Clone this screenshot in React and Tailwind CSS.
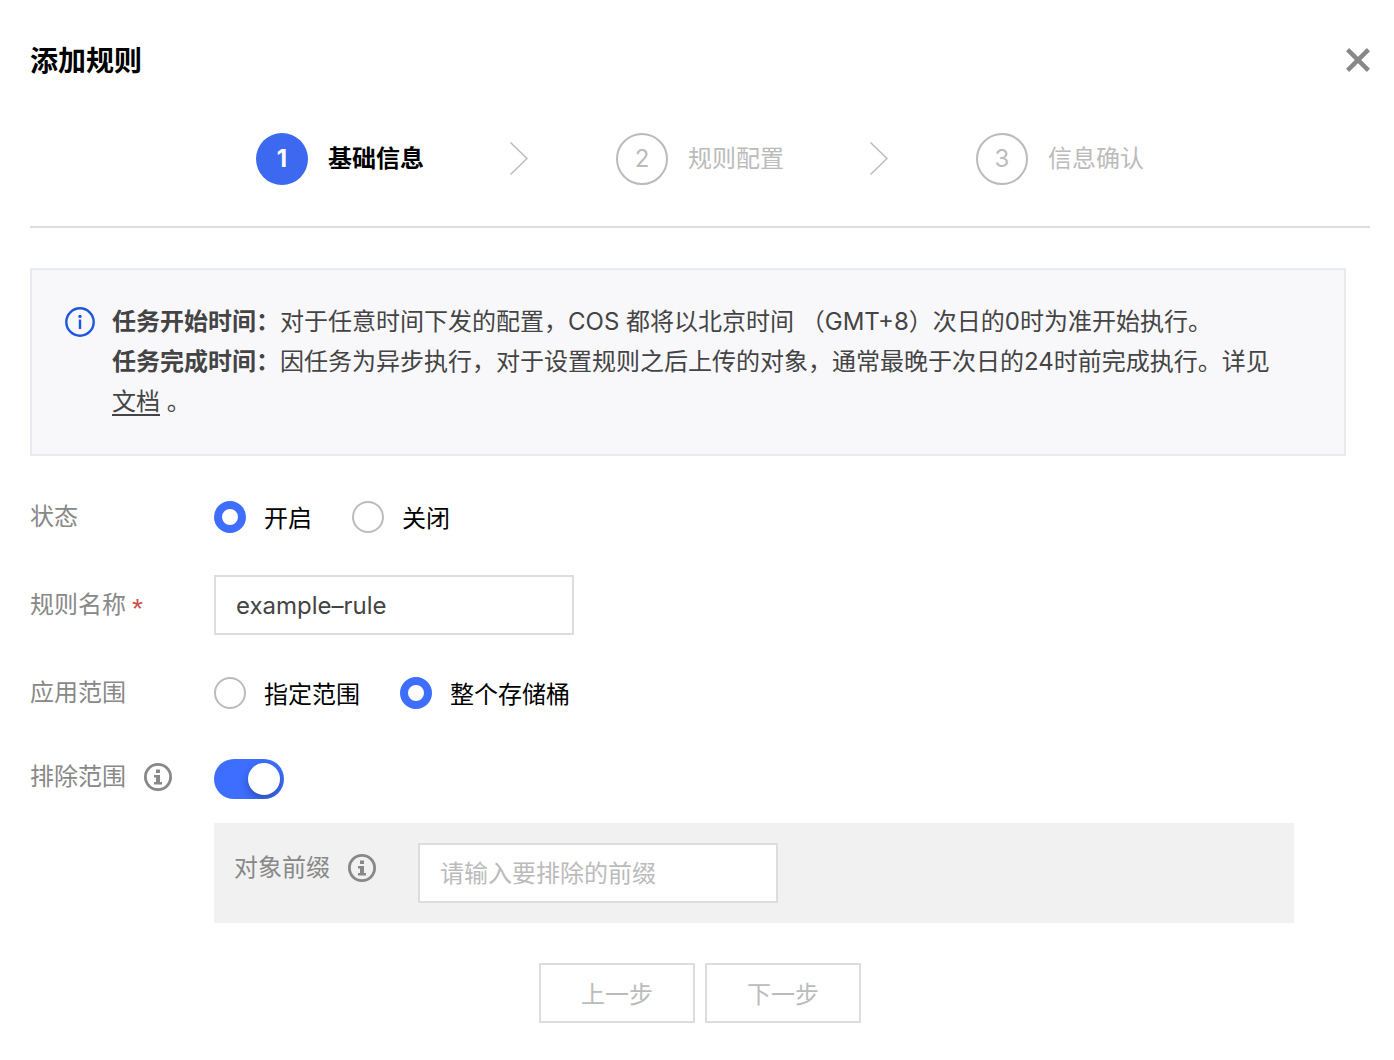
import React, { useState } from 'react';

const steps = ['基础信息', '规则配置', '信息确认'];

const CloseIcon = () => (
  <svg width="24" height="24" viewBox="0 0 24 24" fill="none" stroke="#888888" strokeWidth="4.4">
    <path d="M1.6 1.6l20.8 20.8M22.4 1.6L1.6 22.4" />
  </svg>
);

const ArrowIcon = () => (
  <svg width="18" height="34" viewBox="0 0 18 34" fill="none" stroke="#bbbbbb" strokeWidth="1.5">
    <path d="M0.5 0.5l16.5 16L0.5 32.5" />
  </svg>
);

// Grey help icon beside a field label
const HelpIcon = () => (
  <svg width="28" height="28" viewBox="0 0 28 28" fill="none" aria-hidden="true">
    <circle cx="14" cy="14" r="12.6" stroke="#888888" strokeWidth="2.8" />
    <path d="M12 6.5h4V10h-4zM10 12h6v7h2v2.5h-8V19h2v-4.5h-2z" fill="#888888" />
  </svg>
);

const NoticeIcon = () => (
  <svg width="32" height="32" viewBox="0 0 32 32" fill="none" aria-hidden="true">
    <circle cx="16" cy="16" r="13.7" stroke="#1f56e0" strokeWidth="2.4" />
    <circle cx="16" cy="10.4" r="1.7" fill="#1f56e0" />
    <path d="M14.8 13.5h2.4V23h-2.4z" fill="#1f56e0" />
  </svg>
);

const Radio = ({ name, label, checked, onChange }) => (
  <label className="flex items-center gap-[18px] text-black cursor-pointer">
    <input
      type="radio"
      name={name}
      checked={checked}
      onChange={onChange}
      className="appearance-none size-8 shrink-0 rounded-full border-2 border-[#bbbbbb] bg-white checked:border-8 checked:border-[#3d6eff]"
    />
    <span className="pt-[3px]">{label}</span>
  </label>
);

const inputClass =
  'h-[60px] w-[360px] max-w-full border-2 border-[#dddddd] bg-white px-5 text-[#444444] placeholder:text-[#bbbbbb] placeholder:opacity-100 outline-none';

const buttonClass = 'h-[60px] w-[156px] border-2 border-[#dddddd] bg-white pt-1 text-[#bbbbbb]';

const App = () => {
  const [enabled, setEnabled] = useState(true);
  const [name, setName] = useState('example–rule');
  const [scope, setScope] = useState('bucket');
  const [exclude, setExclude] = useState(true);
  const [prefix, setPrefix] = useState('');

  return (
    <div className="min-h-screen bg-white pt-10 pr-6 pb-9 pl-[30px] font-['Inter','Noto_Sans_CJK_SC',sans-serif] text-2xl text-[#888888]">
      {/* Header */}
      <header className="flex h-10 items-center justify-between">
        <h1 className="pt-1 text-[28px] font-bold text-black">添加规则</h1>
        <button type="button" aria-label="关闭" className="cursor-pointer">
          <CloseIcon />
        </button>
      </header>

      {/* Steps */}
      <ol className="mt-[53px] flex items-center justify-center border-b-2 border-[#dddddd] pb-[41px]">
        {steps.map((step, i) => (
          <li key={step} className="flex items-center">
            {i > 0 && (
              <span className="mr-[88px] ml-[86px]">
                <ArrowIcon />
              </span>
            )}
            <span
              className={
                i === 0
                  ? 'flex size-[52px] items-center justify-center rounded-full bg-[#3c69ef] font-bold text-white'
                  : 'flex size-[52px] items-center justify-center rounded-full border-2 border-[#bbbbbb] text-[#bbbbbb]'
              }
            >
              {i + 1}
            </span>
            <span className={i === 0 ? 'ml-5 font-bold text-black' : 'ml-5 text-[#bbbbbb]'}>{step}</span>
          </li>
        ))}
      </ol>

      {/* Notice */}
      <div className="mt-10 mr-6 flex items-start gap-4 border-2 border-[#e7eaf1] bg-[#f8f8fb] p-8 leading-10 text-[#444444]">
        <span className="flex h-10 shrink-0 items-center">
          <NoticeIcon />
        </span>
        <div>
          <p>
            <strong>任务开始时间：</strong>对于任意时间下发的配置，COS 都将以北京时间 （GMT+8）次日的0时为准开始执行。
          </p>
          <p>
            <strong>任务完成时间：</strong>因任务为异步执行，对于设置规则之后上传的对象，通常最晚于次日的24时前完成执行。详见{' '}
            <a href="#doc" className="whitespace-nowrap underline decoration-2 underline-offset-4">文档</a> 。
          </p>
        </div>
      </div>

      {/* Form */}
      <form className="mt-[43px]" onSubmit={(e) => e.preventDefault()}>
        <div className="flex flex-col gap-10">
          <div className="flex h-9 items-center" role="radiogroup" aria-labelledby="status-label">
            <span id="status-label" className="w-[184px] shrink-0">状态</span>
            <div className="flex gap-10">
              <Radio name="status" label="开启" checked={enabled} onChange={() => setEnabled(true)} />
              <Radio name="status" label="关闭" checked={!enabled} onChange={() => setEnabled(false)} />
            </div>
          </div>

          <div className="flex items-center">
            <label htmlFor="rule-name" className="flex w-[184px] shrink-0 items-center gap-1.5">
              规则名称
              <span className="pt-2 font-['Liberation_Sans',sans-serif] text-[28px] leading-8 text-[#c9504a]">*</span>
            </label>
            <input id="rule-name" type="text" value={name} onChange={(e) => setName(e.target.value)} className={inputClass} />
          </div>

          <div className="flex h-9 items-center" role="radiogroup" aria-labelledby="scope-label">
            <span id="scope-label" className="w-[184px] shrink-0">应用范围</span>
            <div className="flex gap-10">
              <Radio name="scope" label="指定范围" checked={scope === 'custom'} onChange={() => setScope('custom')} />
              <Radio name="scope" label="整个存储桶" checked={scope === 'bucket'} onChange={() => setScope('bucket')} />
            </div>
          </div>

          <div className="flex items-start pt-2">
            <label htmlFor="exclude" className="flex h-9 w-[184px] shrink-0 items-center gap-[18px]">
              排除范围
              <HelpIcon />
            </label>
            <div className="grow">
              <input
                id="exclude"
                type="checkbox"
                role="switch"
                checked={exclude}
                onChange={(e) => setExclude(e.target.checked)}
                className="block h-10 w-[70px] cursor-pointer appearance-none overflow-hidden rounded-full bg-[#bbbbbb] p-1 before:block before:size-8 before:rounded-full before:bg-white before:shadow-[0_4px_8px_rgba(0,0,0,0.3)] checked:bg-[#3d6eff] checked:before:ml-[30px]"
              />
              {exclude && (
                <div className="mt-6 mr-[76px] flex items-start bg-[#f1f1f1] p-5">
                  <label htmlFor="prefix" className="flex h-[50px] w-[184px] shrink-0 items-center gap-[18px]">
                    对象前缀
                    <HelpIcon />
                  </label>
                  <input
                    id="prefix"
                    type="text"
                    value={prefix}
                    placeholder="请输入要排除的前缀"
                    onChange={(e) => setPrefix(e.target.value)}
                    className={inputClass}
                  />
                </div>
              )}
            </div>
          </div>
        </div>

        <div className="mt-10 flex justify-center gap-2.5">
          <button type="button" className={buttonClass}>上一步</button>
          <button type="submit" className={buttonClass}>下一步</button>
        </div>
      </form>
    </div>
  );
};

export default App;
